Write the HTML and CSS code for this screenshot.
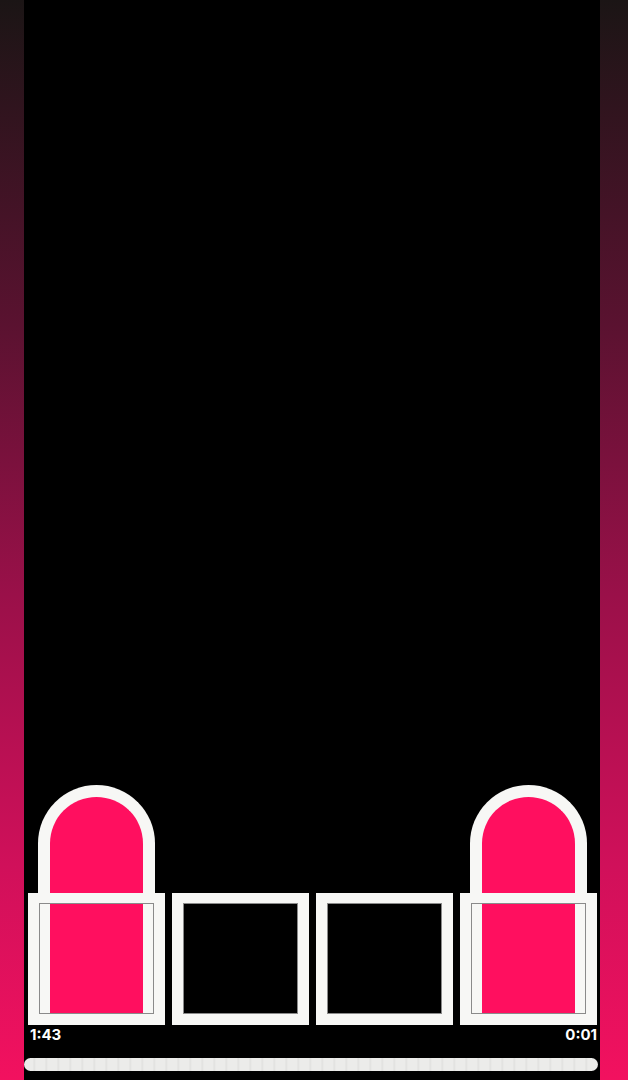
FILE: index.html
```html
<!DOCTYPE html>
<html>
<head>
<meta charset="utf-8">
<link rel="stylesheet" href="styles.css">
</head>
<body>
<div class="screen">
  <div class="strip strip-left"></div>
  <div class="stage">
    <div class="tiles">
      <div class="tile"><div class="arch"></div></div>
      <div class="tile"></div>
      <div class="tile"></div>
      <div class="tile"><div class="arch"></div></div>
    </div>
    <div class="times">
      <span class="time">1:43</span>
      <span class="time">0:01</span>
    </div>
    <div class="progress"></div>
  </div>
  <div class="strip strip-right"></div>
</div>
</body>
</html>
```

FILE: styles.css
```css
html, body {
  margin: 0;
  padding: 0;
  background: #000;
}
.screen {
  display: flex;
  width: 628px;
  height: 1080px;
  overflow: hidden;
}
.strip {
  height: 1080px;
  background: linear-gradient(to bottom, #1b1515 0%, #5a1230 30%, #9a1049 55%, #d0105a 80%, #f2115f 100%);
}
.strip-left { width: 24px; }
.strip-right { width: 28px; }
.stage {
  width: 576px;
  height: 1080px;
  background: #000;
  display: flex;
  flex-direction: column;
  justify-content: flex-end;
  padding-bottom: 9px;
  box-sizing: border-box;
}
.tiles {
  display: flex;
  gap: 7px;
  padding-left: 4px;
}
.tile {
  position: relative;
  width: 137px;
  height: 132px;
  background: #000;
}
.tile::after {
  content: "";
  position: absolute;
  inset: 0;
  border-style: solid;
  border-color: #f7f7f5;
  border-width: 10px 11px 11px 11px;
  box-shadow: inset 0 0 0 1px #8a8a8a;
  z-index: 2;
}
.arch {
  position: absolute;
  left: 10px;
  right: 10px;
  top: -108px;
  bottom: 11px;
  background: #ff0f5f;
  border: 12px solid #f7f7f5;
  border-bottom: 0;
  border-radius: 59px 59px 0 0;
  z-index: 1;
}
.times {
  display: flex;
  justify-content: space-between;
  height: 33px;
  padding: 1px 3px 0 6px;
  box-sizing: border-box;
}
.time {
  font-family: Inter, "Open Sans", sans-serif;
  font-weight: 700;
  font-size: 15px;
  line-height: 18px;
  color: #fff;
}
.progress {
  width: 574px;
  height: 13px;
  border-radius: 7px;
  background:
    repeating-linear-gradient(to right, rgba(0,0,0,0) 0px, rgba(0,0,0,0) 9px, rgba(0,0,0,0.05) 10px, rgba(0,0,0,0) 12px),
    #ececea;
}
```
